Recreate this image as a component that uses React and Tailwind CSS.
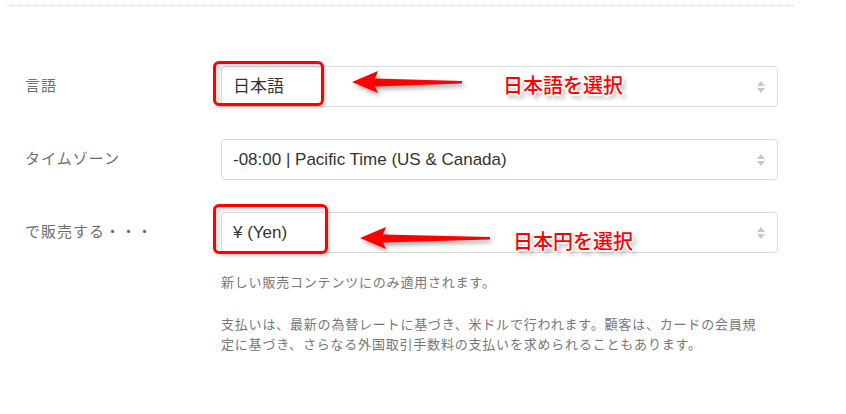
import React from "react";

const font = { fontFamily: '"Liberation Sans", "Noto Sans CJK JP", sans-serif' };

function Chevrons() {
  return (
    <svg width="10" height="14" viewBox="0 0 10 14" className="absolute right-[11px] top-1/2 -translate-y-1/2">
      <path d="M5 1 L9 6 L1 6 Z" fill="#c8c8c8" />
      <path d="M5 13 L9 8 L1 8 Z" fill="#c8c8c8" />
    </svg>
  );
}

function Select({ children }) {
  return (
    <div className="relative flex h-[41px] w-[557px] items-center rounded-[4px] border border-[#dcdcdc] bg-white pl-[11px] text-[17px] text-[#333]">
      <span>{children}</span>
      <Chevrons />
    </div>
  );
}

function Arrow({ className, len }) {
  return (
    <svg width={len + 8} height="30" viewBox={`0 0 ${len + 8} 30`} className={className} style={{ filter: "drop-shadow(2px 3px 2px rgba(0,0,0,0.35))" }}>
      <path d={`M2 13 L28 2 L25 9.5 L${len} 12 L${len} 14.5 L25 17.5 L28 24 Z`} fill="#ff0000" />
    </svg>
  );
}

function Note({ children, className }) {
  return (
    <div
      className={`absolute text-[20px] font-medium leading-none text-[#ff0000] ${className}`}
      style={{
        fontFamily: '"Noto Sans CJK JP", sans-serif',
        textShadow:
          "1.5px 0 0 #fff, -1.5px 0 0 #fff, 0 1.5px 0 #fff, 0 -1.5px 0 #fff, 1px 1px 0 #fff, -1px -1px 0 #fff, 1px -1px 0 #fff, -1px 1px 0 #fff, 3px 4px 4px rgba(0,0,0,0.35)",
      }}
    >
      {children}
    </div>
  );
}

export default function App() {
  return (
    <div className="relative h-[414px] w-[846px] overflow-hidden bg-white" style={font}>
      <div className="pl-[6px] pt-[5px]">
        <div className="w-[787px] border-t border-dotted border-[#cfcfcf]" />
      </div>

      <div className="flex flex-col gap-[32px] pl-[25px] pt-[60px]">
        <div className="flex items-center">
          <div className="w-[196px] text-[15px] tracking-[1px] text-[#6f6f6f]">言語</div>
          <Select>日本語</Select>
        </div>
        <div className="flex items-center">
          <div className="w-[196px] text-[15px] tracking-[1px] text-[#6f6f6f]">タイムゾーン</div>
          <Select>-08:00 | Pacific Time (US &amp; Canada)</Select>
        </div>
        <div className="flex flex-col">
          <div className="flex items-center">
            <div className="w-[196px] text-[15px] tracking-[1px] text-[#6f6f6f]">で販売する・・・</div>
            <Select>¥ (Yen)</Select>
          </div>
          <div className="ml-[196px] mt-[20px] text-[13px] leading-[20px] tracking-[0.8px] text-[#777]">
            新しい販売コンテンツにのみ適用されます。
          </div>
          <div className="ml-[196px] mt-[22px] w-[548px] text-[13px] leading-[20px] tracking-[0.8px] text-[#777]">
            支払いは、最新の為替レートに基づき、米ドルで行われます。顧客は、カードの会員規定に基づき、さらなる外国取引手数料の支払いを求められることもあります。
          </div>
        </div>
      </div>

      {/* annotations */}
      <div className="absolute left-[213px] top-[61px] h-[45px] w-[111px] rounded-[6px] border-[3px] border-[#ff0000]" style={{ boxShadow: "inset 3px 3px 4px rgba(0,0,0,0.15), 2px 2px 3px rgba(0,0,0,0.2)" }} />
      <div className="absolute left-[213px] top-[204px] h-[50px] w-[115px] rounded-[6px] border-[3px] border-[#ff0000]" style={{ boxShadow: "inset 3px 3px 4px rgba(0,0,0,0.15), 2px 2px 3px rgba(0,0,0,0.2)" }} />
      <Arrow className="absolute left-[350px] top-[69px]" len={112} />
      <Arrow className="absolute left-[358px] top-[225px]" len={132} />
      <Note className="left-[503px] top-[75px]">日本語を選択</Note>
      <Note className="left-[513px] top-[231px]">日本円を選択</Note>
    </div>
  );
}
